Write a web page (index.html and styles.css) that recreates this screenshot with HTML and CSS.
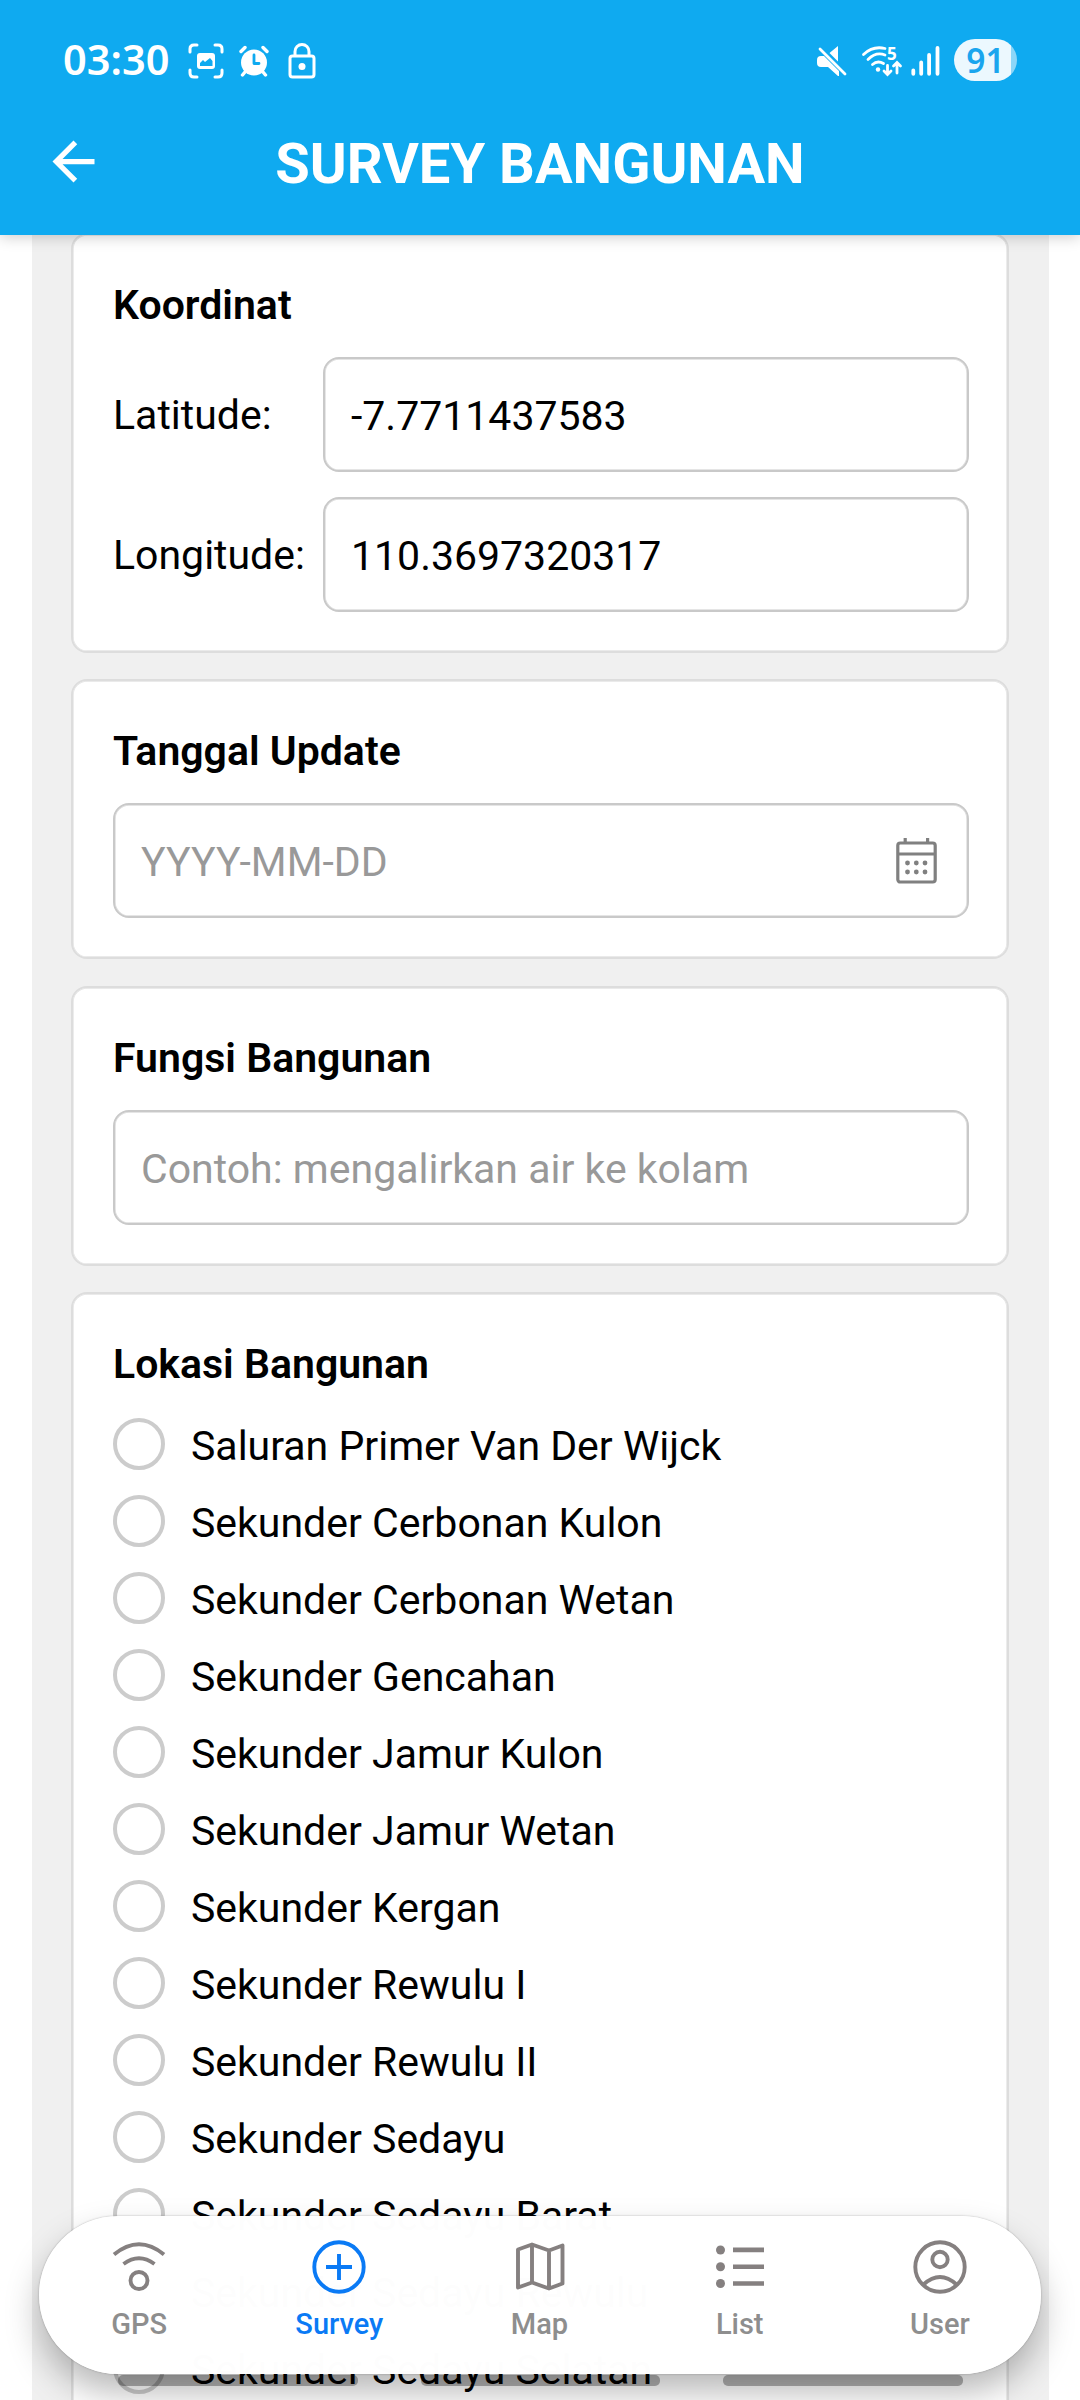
FILE: index.html
```html
<!DOCTYPE html>
<html lang="id">
<head>
<meta charset="utf-8">
<title>Survey Bangunan</title>
<link rel="stylesheet" href="styles.css">
</head>
<body>
<div class="screen">
  <header class="header">
    <div class="status">
      <span class="clock">03:30</span>
      <svg class="st-capture" width="36" height="36" viewBox="0 0 36 36" fill="none" stroke="#fff" stroke-width="3" stroke-linecap="round"><path d="M2 9V6q0-4 4-4h3M27 2h3q4 0 4 4v3M34 27v3q0 4-4 4h-3M9 34H6q-4 0-4-4v-3"/><rect x="9" y="10" width="18" height="16" rx="3" fill="#fff" stroke="none"/><path d="M12 23v-3l3-3 2 2 5-4 2.500 3v5z" fill="#0faaf0" stroke="none"/></svg>
      <svg class="st-alarm" width="30" height="32" viewBox="0 0 30 32"><circle cx="15" cy="17.500" r="13" fill="#fff"/><path d="M2 6.500l4-4M28 6.500l-4-4M6 27l-2.500 3M24 27l2.500 3" stroke="#fff" stroke-width="3.400" stroke-linecap="round"/><path d="M15 10v8.500h5" stroke="#0faaf0" stroke-width="2.800" fill="none" stroke-linecap="round" stroke-linejoin="round"/></svg>
      <svg class="st-lock" width="28" height="36" viewBox="0 0 28 36" fill="none" stroke="#fff" stroke-width="3"><rect x="2" y="13" width="24" height="21" rx="2.500"/><path d="M7 13V8.500a7 7 0 0 1 14 0V13"/><circle cx="14" cy="23.500" r="3.500" fill="#fff" stroke="none"/></svg>
      <span class="spacer"></span>
      <svg class="st-mute" width="30" height="32" viewBox="0 0 30 32" fill="#fff"><path d="M21 1v15.500L12.500 8zM4 11h3L22 26v5h-1l-10-9H4q-4 0-4-4v-3q0-4 4-4z"/><path d="M3 4l25 25" stroke="#fff" stroke-width="2.800" stroke-linecap="round"/></svg>
      <svg class="st-wifi" width="40" height="32" viewBox="0 0 40 32" fill="none" stroke="#fff" stroke-width="2.800" stroke-linecap="round"><path d="M1.500 9.500Q11 .5 23 3.500M6 14.500q8-8 17-4.500M10.500 19.500q5-4.500 11-1"/><circle cx="16" cy="24.500" r="2.200" fill="#fff" stroke="none"/><path d="M25.500 20.500V29M22 26l3.500 3.500L29 26M35 28V18M31.500 21l3.500-3.500 3.500 3.500"/><text class="wifi-gen" x="25" y="15">5</text></svg>
      <svg class="st-signal" width="30" height="32" viewBox="0 0 30 32" stroke="#fff" stroke-width="3.800" stroke-linecap="round"><path d="M2.300 25.500v3.300M10.200 17.500v11.300M18.100 10v18.800M26.500 3v25.800"/></svg>
      <span class="battery">91</span>
    </div>
    <div class="titlebar">
      <svg class="back" width="63" height="63" viewBox="0 0 24 24" fill="#fff"><path d="M20 11H7.830l5.590-5.590L12 4l-8 8 8 8 1.410-1.410L7.830 13H20z"/></svg>
      <h1 class="title">SURVEY BANGUNAN</h1>
    </div>
  </header>

  <main class="form">
    <section class="card">
      <h2 class="label">Koordinat</h2>
      <div class="coord"><span class="coord-name">Latitude:</span><div class="input">-7.7711437583</div></div>
      <div class="coord"><span class="coord-name">Longitude:</span><div class="input">110.3697320317</div></div>
    </section>
    <section class="card">
      <h2 class="label">Tanggal Update</h2>
      <div class="input hint">YYYY-MM-DD
        <svg class="calendar" width="41" height="46" viewBox="0 0 41 46" fill="none" stroke="#808080" stroke-width="3.200"><rect x="1.800" y="5" width="37.400" height="39" rx="2.500"/><path d="M2 16h37M9.200 0v5M31.600 0v5"/><g fill="#808080" stroke="none"><circle cx="11.500" cy="25" r="2.400"/><circle cx="20.300" cy="25" r="2.400"/><circle cx="29" cy="25" r="2.400"/><circle cx="11.500" cy="34" r="2.400"/><circle cx="20.300" cy="34" r="2.400"/><circle cx="29" cy="34" r="2.400"/></g></svg>
      </div>
    </section>
    <section class="card">
      <h2 class="label">Fungsi Bangunan</h2>
      <div class="input hint">Contoh: mengalirkan air ke kolam</div>
    </section>
    <section class="card">
      <h2 class="label">Lokasi Bangunan</h2>
      <ul class="options">
        <li class="option"><i class="radio"></i><span class="option-name">Saluran Primer Van Der Wijck</span></li>
        <li class="option"><i class="radio"></i><span class="option-name">Sekunder Cerbonan Kulon</span></li>
        <li class="option"><i class="radio"></i><span class="option-name">Sekunder Cerbonan Wetan</span></li>
        <li class="option"><i class="radio"></i><span class="option-name">Sekunder Gencahan</span></li>
        <li class="option"><i class="radio"></i><span class="option-name">Sekunder Jamur Kulon</span></li>
        <li class="option"><i class="radio"></i><span class="option-name">Sekunder Jamur Wetan</span></li>
        <li class="option"><i class="radio"></i><span class="option-name">Sekunder Kergan</span></li>
        <li class="option"><i class="radio"></i><span class="option-name">Sekunder Rewulu I</span></li>
        <li class="option"><i class="radio"></i><span class="option-name">Sekunder Rewulu II</span></li>
        <li class="option"><i class="radio"></i><span class="option-name">Sekunder Sedayu</span></li>
        <li class="option"><i class="radio"></i><span class="option-name">Sekunder Sedayu Barat</span></li>
        <li class="option"><i class="radio"></i><span class="option-name">Sekunder Sedayu Rewulu</span></li>
        <li class="option"><i class="radio"></i><span class="option-name">Sekunder Sedayu Selatan</span></li>
      </ul>
    </section>
  </main>

  <div class="gesture"><i class="grip"></i><i class="grip"></i><i class="grip"></i></div>

  <nav class="tabs">
    <a class="tab"><svg width="54" height="54" viewBox="0 0 54 54" fill="none" stroke="currentColor" stroke-width="3.900"><path d="M2 14.500q25-20.500 50 0M11.500 24q15.500-11.500 31 0"/><circle cx="27" cy="40.500" r="8.500"/></svg><span class="tab-name">GPS</span></a>
    <a class="tab active"><svg width="54" height="54" viewBox="0 0 54 54" fill="none" stroke="currentColor" stroke-width="3.900"><circle cx="27" cy="27" r="24.700"/><path d="M27 14v26M14 27h26"/></svg><span class="tab-name">Survey</span></a>
    <a class="tab"><svg width="54" height="54" viewBox="0 0 54 54" fill="none" stroke="currentColor" stroke-width="3.900" stroke-linejoin="round"><path d="M5 9.500l14-5 17 6 13.500-5v38l-13.500 5-17-6-14 5zM19 4.500v38M36 10.500v38"/></svg><span class="tab-name">Map</span></a>
    <a class="tab"><svg width="54" height="54" viewBox="0 0 54 54" fill="currentColor"><circle cx="7.500" cy="10" r="4.500"/><circle cx="7.500" cy="26.700" r="4.500"/><circle cx="7.500" cy="43.500" r="4.500"/><path d="M20 7.600h31v4.600H20zM20 24.400h31v4.600H20zM20 41.200h31v4.600H20z"/></svg><span class="tab-name">List</span></a>
    <a class="tab"><svg width="54" height="54" viewBox="0 0 54 54" fill="none" stroke="currentColor" stroke-width="3.900"><circle cx="27" cy="27" r="24.700"/><circle cx="27" cy="19.500" r="7.700"/><path d="M10.500 44.500q16.500-15 33 0"/></svg><span class="tab-name">User</span></a>
  </nav>
</div>
</body>
</html>
```
FILE: styles.css
```css
* { box-sizing: border-box; }
body { margin: 0; font-family: Roboto, sans-serif; font-size: 41px; color: #000; background: #fff; }
.screen { position: relative; width: 1080px; height: 2400px; overflow: hidden; display: flex; flex-direction: column; }

.header { position: relative; z-index: 1; flex: none; height: 235px; background: #0faaf0; color: #fff; box-shadow: 0 2px 14px rgba(0,0,0,.2); }
.status { display: flex; align-items: center; height: 122px; padding: 0 63px; }
.spacer { flex: 1; }
.clock { font: 600 41.500px/1 "Noto Sans", sans-serif; margin: -2px 19px 0 0; }
.st-alarm { margin: 0 19px 0 15px; }
.st-wifi { margin: 0 9px 0 15px; overflow: visible; }
.wifi-gen { font: 700 17px "Noto Sans", sans-serif; fill: #fff; stroke: none; }
.battery { width: 63px; height: 42px; margin: -2px 0 0 13px; border-radius: 21px; background: linear-gradient(90deg, #ecf8fe 57px, #8dd6f8 57px); color: #1aa5ee; font: 600 33.500px/42px "Noto Sans", sans-serif; text-align: center; }
.titlebar { position: relative; display: flex; justify-content: center; align-items: center; height: 80px; }
.back { position: absolute; left: 42px; top: 8px; }
.title { margin: 0; padding-top: 3px; font-size: 56.100px; font-weight: 700; line-height: 80px; }

.form { flex: none; display: flex; flex-direction: column; gap: 26.400px; width: 1017px; margin: -2px 0 0 32px; padding: 0 40px 0 39px; background: #f0f0f0; }
.card { padding: 39px 38px 39px 40px; background: #fff; border: 2px solid #ddd; border-radius: 16px; box-shadow: inset 0 0 0 .7px #e4e4e4; display: flex; flex-direction: column; }
.label { margin: 0 0 21px; font-size: 41px; font-weight: 600; line-height: 62px; }
.input { flex: 1; display: flex; align-items: center; justify-content: space-between; height: 115px; min-height: 115px; padding: 3px 30px 0 26px; border: 2px solid #c9c9c9; border-radius: 16px; box-shadow: inset 0 0 0 .7px #ddd; }
.hint { color: #999; }
.calendar { margin-top: -3px; }
.coord { display: flex; align-items: center; }
.coord + .coord { margin-top: 25px; }
.coord-name { width: 210px; }
.options { list-style: none; margin: 2px 0 0; padding: 0; display: flex; flex-direction: column; gap: 25px; }
.option { display: flex; align-items: center; gap: 26px; height: 52px; }
.option-name { padding-top: 4px; }
.radio { width: 52px; height: 52px; border: 4px solid #ccc; border-radius: 50%; }

.gesture { position: absolute; left: 118px; top: 2375px; display: flex; gap: 63px; }
.grip { width: 239.500px; height: 11px; border-radius: 5px; background: rgba(0,0,0,.3); }

.tabs { position: absolute; left: 39px; top: 2216px; width: 1002px; height: 158px; padding-right: 1px; border-radius: 79px; display: flex; background: rgba(255,255,255,.992); box-shadow: 0 0 2px rgba(0,0,0,.3), 0 18px 34px rgba(0,0,0,.28); }
.tab { flex: 1; display: flex; flex-direction: column; align-items: center; padding-top: 24px; color: #858080; font-weight: 500; }
.tab-name { margin-top: 13px; font-size: 29px; line-height: 34px; color: #8e8e8e; }
.active, .active .tab-name { color: #0a7af5; }
```
